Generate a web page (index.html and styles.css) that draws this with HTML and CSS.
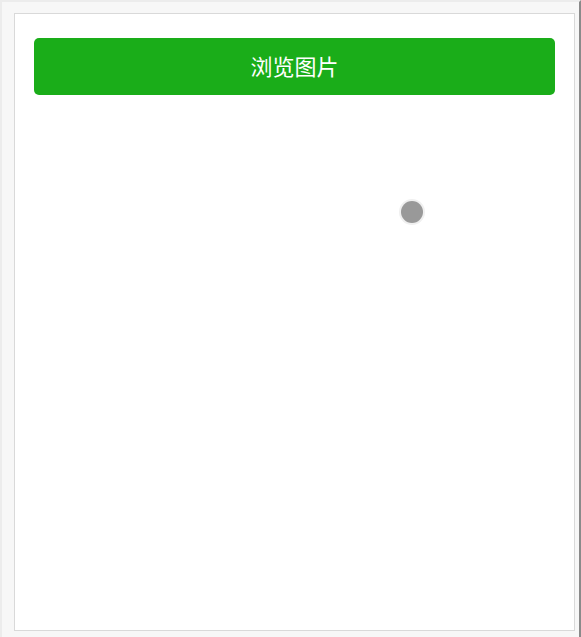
FILE: index.html
```html
<!DOCTYPE html>
<html lang="zh">
<head>
<meta charset="utf-8">
<title>浏览图片</title>
<link rel="stylesheet" href="styles.css">
</head>
<body>
<div class="frame">
  <div class="panel">
    <button class="btn" type="button">浏览图片</button>
    <div class="canvas">
      <span class="dot"></span>
    </div>
  </div>
</div>
</body>
</html>
```
FILE: styles.css
```css
html, body {
  margin: 0;
  padding: 0;
  height: 100%;
}
body {
  background: #f4f4f4;
  font-family: "Noto Sans CJK SC", "Noto Sans", sans-serif;
}
.frame {
  box-sizing: border-box;
  height: 637px;
  width: 581px;
  padding: 13px 4px 4px 14px;
  border-left: 2px solid #ececec;
  border-top: 2px solid #ececec;
  border-right: 2px solid #8a8a8a;
  background: #f7f7f7;
}
.panel {
  box-sizing: border-box;
  position: relative;
  height: 618px;
  margin-left: -2px;
  margin-top: -2px;
  background: #fff;
  border: 1px solid #d9d9d9;
  padding: 24px 19px 0 19px;
}
.btn {
  display: block;
  width: 100%;
  height: 57px;
  border: none;
  border-radius: 5px;
  background: #1aad19;
  color: #fff;
  font-family: "Noto Sans CJK SC", "Noto Sans", sans-serif;
  font-size: 22px;
  padding: 0 0 4px 0;
  cursor: pointer;
}
.canvas {
  position: relative;
  height: 500px;
}
.dot {
  position: absolute;
  left: 367px;
  top: 106px;
  width: 22px;
  height: 22px;
  border-radius: 50%;
  background: #999;
  box-shadow: 0 0 0 2px #f0f0f0;
}
```
